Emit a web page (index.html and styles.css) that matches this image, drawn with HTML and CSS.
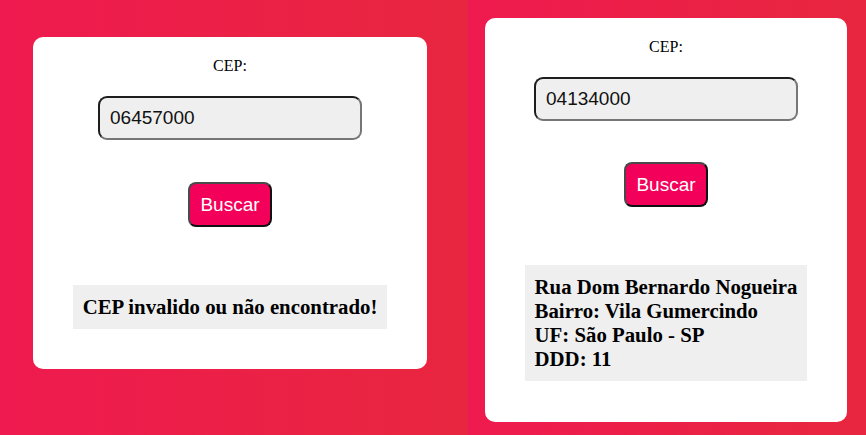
FILE: index.html
```html
<!DOCTYPE html>
<html lang="pt-BR">
<head>
<meta charset="utf-8">
<title>Busca CEP</title>
<link rel="stylesheet" href="styles.css">
</head>
<body>
  <div class="panel panel-left">
    <div class="card card-left">
      <label class="label" for="cep1">CEP:</label>
      <input class="cep-input" id="cep1" type="text" value="06457000">
      <button class="btn" type="button">Buscar</button>
      <div class="result result-center">CEP invalido ou não encontrado!</div>
    </div>
  </div>
  <div class="panel panel-right">
    <div class="card card-right">
      <label class="label" for="cep2">CEP:</label>
      <input class="cep-input" id="cep2" type="text" value="04134000">
      <button class="btn btn-right" type="button">Buscar</button>
      <div class="result">Rua Dom Bernardo Nogueira<br>Bairro: Vila Gumercindo<br>UF: São Paulo - SP<br>DDD: 11</div>
    </div>
  </div>
</body>
</html>
```
FILE: styles.css
```css
html, body {
  margin: 0;
  padding: 0;
  height: 435px;
  overflow: hidden;
}
body {
  display: flex;
  font-family: "Liberation Serif", "Times New Roman", serif;
}
.panel {
  height: 435px;
  background: linear-gradient(to right, #ef1a4f, #e8263f);
  display: flex;
  align-items: flex-start;
}
.panel-left {
  width: 468px;
}
.panel-right {
  width: 398px;
}
.card {
  background: #fff;
  border-radius: 10px;
  padding: 20px 0 40px;
  display: flex;
  flex-direction: column;
  align-items: center;
  box-sizing: border-box;
}
.card-left {
  width: 394px;
  margin: 37px 0 0 33px;
}
.card-right {
  width: 362px;
  margin: 18px 0 0 17px;
  padding-bottom: 41px;
}
.label {
  font-size: 16px;
  color: #000;
  line-height: 18px;
  height: 18px;
}
.cep-input {
  margin-top: 21px;
  width: 264px;
  height: 44px;
  box-sizing: border-box;
  border: 2px solid;
  border-color: #1e1e1e #767676 #767676 #1e1e1e;
  border-radius: 9px;
  background: #efefef;
  padding: 0 10px;
  font-family: "Liberation Sans", Arial, sans-serif;
  font-size: 19px;
  color: #111;
  outline: none;
}
.btn {
  margin-top: 42px;
  width: 84px;
  height: 45px;
  box-sizing: border-box;
  border: 2px solid;
  border-color: #4a4a4a #111 #111 #4a4a4a;
  border-radius: 8px;
  background: #f2005a;
  color: #fff;
  font-family: "Liberation Sans", Arial, sans-serif;
  font-size: 19px;
  padding: 0;
}
.btn-right {
  margin-top: 41px;
}
.result {
  margin-top: 58px;
  background: #efefef;
  padding: 10px;
  font-weight: bold;
  font-size: 20.8px;
  line-height: 24px;
  color: #000;
  text-align: left;
}
.result-center {
  text-align: center;
}
```
